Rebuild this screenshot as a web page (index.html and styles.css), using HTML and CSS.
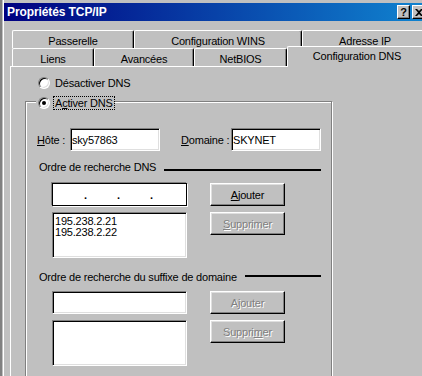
FILE: index.html
```html
<!DOCTYPE html>
<html lang="fr">
<head>
  <meta charset="UTF-8" />
  <title>Propriétés TCP/IP</title>
  <link rel="stylesheet" href="styles.css">
</head>
<body>
  <div class="window">
    <div class="frame">
      <div class="titlebar">
        <span class="title">Propriétés TCP/IP</span>
        <div class="title-btns">
          <span class="tbtn">?</span>
          <span class="tbtn">
            <svg width="8" height="7" viewBox="0 0 8 7"><path d="M0 0h2l2 2 2-2h2L5 3.5 8 7H6L4 5 2 7H0l3-3.5z" fill="#000"/></svg>
          </span>
        </div>
      </div>

      <div class="tabs">
        <div class="tab-row back">
          <div class="tab w-pass">Passerelle</div>
          <div class="tab w-wins">Configuration WINS</div>
          <div class="tab w-ip">Adresse IP</div>
        </div>
        <div class="tab-row front">
          <div class="tab w-liens">Liens</div>
          <div class="tab w-avan">Avancées</div>
          <div class="tab w-net">NetBIOS</div>
          <div class="tab active">Configuration DNS</div>
        </div>
      </div>

      <div class="panel">
        <div class="opt first">
          <span class="radio"></span>
          <span class="opt-text">Désactiver DNS</span>
        </div>

        <div class="group">
          <div class="opt group-head">
            <span class="radio checked"></span>
            <span class="opt-text focus">A<u>c</u>tiver DNS</span>
          </div>

          <div class="host-row">
            <span class="lbl lbl-host"><u>H</u>ôte :</span>
            <input class="field" type="text" value="sky57863">
            <span class="lbl lbl-domain"><u>D</u>omaine :</span>
            <input class="field" type="text" value="SKYNET">
          </div>

          <div class="sect-title">
            <span>Ordre de recherche DNS</span>
            <span class="rule"></span>
          </div>
          <div class="sect-body">
            <div class="col-left">
              <div class="ipbox"><span class="dot">.</span><span class="dot">.</span><span class="dot">.</span></div>
              <div class="listbox">
                <div>195.238.2.21</div>
                <div>195.238.2.22</div>
              </div>
            </div>
            <div class="col-btns">
              <button class="btn" type="button"><u>A</u>jouter</button>
              <button class="btn" type="button" disabled><u>S</u>upprimer</button>
            </div>
          </div>

          <div class="sect-title second">
            <span>Ordre de recherche du suffixe de domaine</span>
            <span class="rule"></span>
          </div>
          <div class="sect-body second">
            <div class="col-left">
              <input class="field wide" type="text" value="">
              <div class="listbox"></div>
            </div>
            <div class="col-btns">
              <button class="btn" type="button" disabled>A<u>j</u>outer</button>
              <button class="btn" type="button" disabled>Suppri<u>m</u>er</button>
            </div>
          </div>
        </div>
      </div>
    </div>
  </div>
</body>
</html>
```

FILE: styles.css
```css
:root {
  --face: #c0c0c0;
  --shadow: #808080;
  --light: #dfdfdf;
  --hilite: #fff;
  --dark: #000;
}
html, body {
  margin: 0;
  padding: 0;
}
body {
  width: 422px;
  height: 376px;
  overflow: hidden;
  background: var(--face);
  font-family: "Liberation Sans", Arial, sans-serif;
  font-size: 11px;
  letter-spacing: -0.2px;
  color: #000;
}
.window {
  width: 440px;
  height: 376px;
  box-sizing: border-box;
  border-left: 2px solid var(--shadow);
  padding-left: 1px;
  overflow: hidden;
}
.frame {
  height: 100%;
  box-sizing: border-box;
  border-left: 1px solid var(--hilite);
  padding-top: 3px;
}

/* title bar */
.titlebar {
  display: flex;
  align-items: center;
  width: 423px;
  height: 18px;
  box-sizing: border-box;
  padding: 0 2px 0 3px;
  background: linear-gradient(to right, #000080, #1084d0);
  color: #fff;
  font-size: 12px;
  font-weight: bold;
  letter-spacing: -0.1px;
}
.title-btns {
  display: flex;
  gap: 2px;
  margin-left: auto;
}
.tbtn {
  display: flex;
  align-items: center;
  justify-content: center;
  width: 13px;
  height: 14px;
  box-sizing: border-box;
  background: var(--face);
  border: 1px solid;
  border-color: var(--hilite) var(--dark) var(--dark) var(--hilite);
  box-shadow: inset -1px -1px var(--shadow);
  color: #000;
  font-size: 11px;
  line-height: 12px;
}

/* tabs */
.tabs {
  margin: 9px 0 0 8px;
}
.tab-row {
  display: flex;
  height: 18px;
}
.tab {
  box-sizing: border-box;
  height: 18px;
  padding-top: 2px;
  border-top: 1px solid var(--hilite);
  border-left: 1px solid var(--hilite);
  border-right: 1px solid var(--dark);
  border-radius: 2px 2px 0 0;
  box-shadow: inset -1px 0 var(--shadow);
  background: var(--face);
  text-align: center;
  line-height: 16px;
  white-space: nowrap;
}
.w-pass { width: 122px; }
.w-wins { width: 168px; }
.w-ip { width: 126px; }
.w-liens { width: 82px; }
.w-avan { width: 100px; }
.w-net { width: 93px; }
.tab.active {
  position: relative;
  z-index: 1;
  width: 140px;
  height: 21px;
  margin-top: -2px;
  padding-top: 1px;
}

/* page */
.panel {
  height: 309px;
  margin-left: 6px;
  border-top: 1px solid var(--hilite);
  border-left: 1px solid var(--hilite);
  overflow: hidden;
}
.opt {
  display: flex;
  align-items: center;
  gap: 3px;
  height: 14px;
}
.opt.first {
  margin: 9px 0 0 27px;
}
.radio {
  position: relative;
  flex: none;
  width: 12px;
  height: 12px;
  box-sizing: border-box;
  border-radius: 50%;
  background: #fff;
  border: 1px solid;
  border-color: var(--shadow) var(--hilite) var(--hilite) var(--shadow);
  box-shadow: inset 1px 1px var(--dark), inset -1px -1px var(--light);
}
.radio.checked::after {
  content: "";
  position: absolute;
  left: 3px;
  top: 3px;
  width: 4px;
  height: 4px;
  border-radius: 50%;
  background: #000;
}
.opt-text {
  padding: 0 1px;
  border: 1px solid transparent;
  line-height: 12px;
}
.opt-text.focus {
  border: 1px dotted #000;
}

.group {
  width: 307px;
  height: 290px;
  box-sizing: border-box;
  margin: 11px 0 0 14px;
  border: 1px solid var(--shadow);
  box-shadow: inset 1px 1px var(--hilite), 1px 1px var(--hilite);
}
.group-head {
  width: fit-content;
  margin: -6px 0 0 10px;
  padding-left: 2px;
  background: var(--face);
}

.host-row {
  display: flex;
  align-items: center;
  margin: 18px 0 0 11px;
}
.lbl-host { width: 33px; }
.lbl-domain {
  width: 50px;
  margin-left: 21px;
}
.field {
  width: 90px;
  height: 23px;
  box-sizing: border-box;
  margin: 0;
  padding: 0 0 0 1px;
  border: 1px solid;
  border-color: var(--shadow) var(--hilite) var(--hilite) var(--shadow);
  box-shadow: inset 1px 1px var(--dark), inset -1px -1px var(--light);
  background: #fff;
  color: #000;
  font: inherit;
  letter-spacing: inherit;
  outline: none;
}
.field.wide { width: 135px; }

.sect-title {
  display: flex;
  align-items: center;
  height: 13px;
  margin: 10px 0 0 13px;
  line-height: 13px;
}
.sect-title.second { margin-top: 13px; }
.rule {
  flex: 1;
  height: 2px;
  margin: 4px 10px 0 8px;
  background: #000;
}
.sect-title.second .rule {
  margin-top: 0;
  margin-bottom: 3px;
}
.sect-body {
  display: flex;
  gap: 23px;
  margin: 9px 0 0 26px;
}
.sect-body.second { margin-top: 7px; }
.col-left {
  display: flex;
  flex-direction: column;
  gap: 6px;
  width: 135px;
}
.col-btns {
  display: flex;
  flex-direction: column;
  gap: 6px;
}
.ipbox {
  display: flex;
  align-items: center;
  height: 23px;
  box-sizing: border-box;
  padding-left: 31px;
  border: 1px solid #000;
  box-shadow: -1px -1px var(--shadow), 1px 1px var(--hilite);
  background: #fff;
}
.dot {
  width: 33px;
  font-weight: bold;
}
.listbox {
  height: 46px;
  box-sizing: border-box;
  padding: 3px 0 0 2px;
  border: 1px solid;
  border-color: var(--shadow) var(--hilite) var(--hilite) var(--shadow);
  box-shadow: inset 1px 1px var(--dark), inset -1px -1px var(--light);
  background: #fff;
  line-height: 11px;
}
.btn {
  width: 75px;
  height: 23px;
  box-sizing: border-box;
  padding: 0;
  border: 1px solid;
  border-color: var(--hilite) var(--dark) var(--dark) var(--hilite);
  box-shadow: inset -1px -1px var(--shadow), inset 1px 1px var(--light);
  background: var(--face);
  color: #000;
  font: inherit;
  letter-spacing: inherit;
}
.btn:disabled {
  color: var(--shadow);
  text-shadow: 1px 1px var(--hilite);
}
```
